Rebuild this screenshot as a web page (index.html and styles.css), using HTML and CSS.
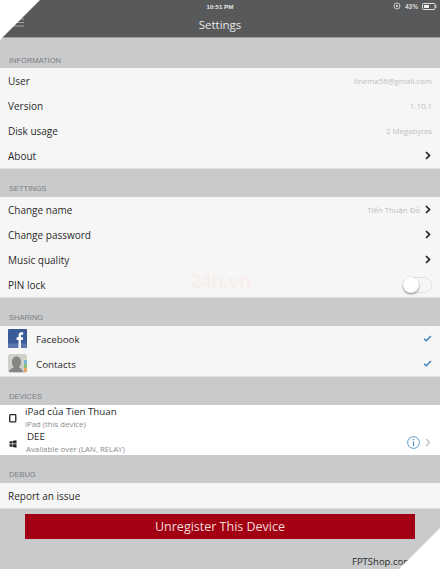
FILE: index.html
```html
<!DOCTYPE html>
<html lang="en">
<head>
<meta charset="utf-8">
<title>Settings</title>
<link rel="stylesheet" href="styles.css">
</head>
<body>
<div class="page">
  <header class="topbar">
    <div class="status">
      <span class="status-time">10:51 PM</span>
      <span class="status-right">
        <svg class="status-lock" width="8" height="8" viewBox="0 0 8 8"><circle cx="4" cy="4" r="3" fill="none" stroke="#c8c8c8" stroke-width="1"/><circle cx="4" cy="4" r="1.2" fill="#c8c8c8"/></svg>
        <span>43%</span>
        <svg width="15" height="7" viewBox="0 0 15 7"><rect x=".5" y=".5" width="12.5" height="6" rx="1" fill="none" stroke="#e0e0e0"/><rect x="2" y="2" width="5" height="3" fill="#f0f0f0"/><rect x="13.5" y="2.2" width="1" height="2.6" fill="#e0e0e0"/></svg>
      </span>
    </div>
    <div class="nav">
      <svg class="menu" width="14" height="9" viewBox="0 0 14 9"><path d="M1 1h12M1 4.5h12M1 8h12" stroke="#a5a6a8" stroke-width="1.2"/></svg>
      <span class="nav-title">Settings</span>
    </div>
  </header>

  <h2 class="label label-first">INFORMATION</h2>
  <section class="group">
    <div class="row"><span class="name">User</span><span class="value">linema56@gmail.com</span></div>
    <div class="row"><span class="name">Version</span><span class="value">1.10.1</span></div>
    <div class="row"><span class="name">Disk usage</span><span class="value">2 Megabytes</span></div>
    <div class="row"><span class="name">About</span><svg class="chev" viewBox="0 0 6 9"><path d="M1 1l3.5 3.5L1 8" fill="none" stroke="#222" stroke-width="1.7"/></svg></div>
  </section>

  <h2 class="label">SETTINGS</h2>
  <section class="group">
    <div class="row"><span class="name">Change name</span><span class="value value-chev">Tiến Thuận Đỗ</span><svg class="chev" viewBox="0 0 6 9"><path d="M1 1l3.5 3.5L1 8" fill="none" stroke="#222" stroke-width="1.7"/></svg></div>
    <div class="row"><span class="name">Change password</span><svg class="chev" viewBox="0 0 6 9"><path d="M1 1l3.5 3.5L1 8" fill="none" stroke="#222" stroke-width="1.7"/></svg></div>
    <div class="row"><span class="name">Music quality</span><svg class="chev" viewBox="0 0 6 9"><path d="M1 1l3.5 3.5L1 8" fill="none" stroke="#222" stroke-width="1.7"/></svg></div>
    <div class="row"><span class="name">PIN lock</span><span class="toggle"><span class="knob"></span></span></div>
    <div class="watermark"><span class="wm-text">24h.vn</span></div>
  </section>

  <h2 class="label">SHARING</h2>
  <section class="group">
    <div class="row row-icon">
      <svg class="app" viewBox="0 0 19 19"><rect width="19" height="19" rx="1" fill="#3b5a98"/><rect y="14.5" width="19" height="4.5" fill="#5a76ad"/><path d="M10.5 19v-8H8.6V8.2h1.9V6.300c0-2 1.200-3 3-3 .8 0 1.400.1 1.700.1v2.400h-1.100c-.9 0-1.200.5-1.200 1.200v1.200h2.200l-.3 2.800h-1.900v8z" fill="#fff"/></svg>
      <span class="name">Facebook</span>
      <svg class="check" viewBox="0 0 9 7"><path d="M1 3.700l2.300 2L8 1" fill="none" stroke="#3d7cb8" stroke-width="1.400"/></svg>
    </div>
    <div class="row row-icon">
      <svg class="app" viewBox="0 0 19 19"><rect width="19" height="19" rx="3" fill="#cfcfcb"/><rect x="16" y="1" width="3" height="5" fill="#d8d4c4"/><rect x="16" y="6" width="3" height="4" fill="#79b5d8"/><rect x="16" y="10" width="3" height="4" fill="#8cc17f"/><rect x="16" y="14" width="3" height="4" fill="#e8a860"/><path d="M1 18c.3-3 3-3.500 5-4.500-1.500-2-2.300-4-2-6.500.3-3 2.400-4.500 4.500-4.500S12.700 4 13 7c.3 2.500-.5 4.500-2 6.500 2 1 3.500 1.500 4 4.500z" fill="#858583"/></svg>
      <span class="name">Contacts</span>
      <svg class="check" viewBox="0 0 9 7"><path d="M1 3.700l2.300 2L8 1" fill="none" stroke="#3d7cb8" stroke-width="1.400"/></svg>
    </div>
  </section>

  <h2 class="label">DEVICES</h2>
  <section class="group group-white">
    <div class="row device">
      <svg class="dev-icon" viewBox="0 0 8 9"><rect x=".7" y=".7" width="6.100" height="7.100" rx=".8" fill="none" stroke="#222" stroke-width="1.300"/></svg>
      <div class="dev-text"><span class="dev-name">iPad của Tien Thuan</span><span class="dev-sub">iPad (this device)</span></div>
    </div>
    <div class="row device">
      <svg class="dev-icon dev-win" viewBox="0 0 8 8"><path d="M.5 1.600l3-.7v2.700h-3zM4 .8l3.500-.6v3.400H4zM.5 4.200h3v2.800l-3-.6zM4 4.200h3.500v3.500L4 7.100z" fill="#222"/></svg>
      <div class="dev-text dev-text-win"><span class="dev-name">DEE</span><span class="dev-sub">Available over (LAN, RELAY)</span></div>
      <svg class="info" viewBox="0 0 13 13"><circle cx="6.500" cy="6.500" r="5.900" fill="none" stroke="#4d92c4" stroke-width=".9"/><path d="M6.500 3v1.200M6.500 5.500v4.500" stroke="#4d92c4" stroke-width="1.200"/></svg>
      <svg class="chev chev-pale" viewBox="0 0 6 9"><path d="M1 1l3.500 3.500L1 8" fill="none" stroke="#bcbcbc" stroke-width="1.200"/></svg>
    </div>
  </section>

  <h2 class="label">DEBUG</h2>
  <section class="group">
    <div class="row"><span class="name">Report an issue</span></div>
  </section>

  <div class="action"><button class="unregister" type="button">Unregister This Device</button></div>
  <div class="credit">FPTShop.com</div>

  <div class="corner corner-tl"></div>
  <div class="corner corner-br"></div>
</div>
</body>
</html>
```

FILE: styles.css
```css
* { box-sizing: border-box; }
html, body { margin: 0; padding: 0; }
body { background: #c9cacc; font-family: "Open Sans", "Liberation Sans", sans-serif; }
.page { position: relative; width: 440px; height: 569px; overflow: hidden; background: #c9cacc; color: #2a2a2a; }

.topbar { height: 38px; background: #58595b; border-bottom: 1px solid #9b9c9e; color: #fff; }
.status { height: 12px; position: relative; display: flex; justify-content: center; align-items: center; padding-top: 1px; }
.status-time { font: bold 6.200px "Liberation Sans", sans-serif; color: #e8e8e8; }
.status-right { position: absolute; right: 3px; top: 2px; display: flex; align-items: center; gap: 4px; font: bold 6.500px "Liberation Sans", sans-serif; color: #d8d8d8; }
.nav { height: 25px; position: relative; display: flex; justify-content: center; align-items: center; }
.menu { position: absolute; left: 11px; top: 6px; }
.nav-title { font-size: 11.500px; color: #e9e9e9; margin-top: -1px; }

.label { margin: 0; height: 18px; padding: 4px 0 0 9px; font: normal 7.500px/11px "Liberation Sans", sans-serif; color: #7c7d7f; }
.label-first { margin-top: 13px; height: 17px; }

.group { position: relative; background: #f6f6f6; margin-bottom: 10px; border-bottom: 1px solid #e0e0e0; }
.group-white { background: #fff; border-bottom: 0; }
.row { height: 25px; display: flex; align-items: center; padding: 0 8px; font-size: 10px; }
.name { color: #2a2a2a; }
.value { margin-left: auto; font-size: 7.800px; color: #c0c0c0; }
.value-chev { margin-right: 5px; }
.chev { width: 6px; height: 9px; margin-left: auto; margin-right: 1px; flex: none; }
.value-chev + .chev { margin-left: 0; }

.toggle { margin-left: auto; margin-right: 0; width: 29px; height: 16px; border-radius: 8px; border: 1px solid #e2e2e2; background: #f6f6f6; position: relative; }
.knob { position: absolute; left: -1px; top: -1px; width: 16px; height: 16px; border-radius: 50%; background: #fff; box-shadow: 0 1px 2px rgba(0,0,0,.5); }

.watermark { position: absolute; left: 187px; top: 65px; width: 66px; height: 38px; display: flex; align-items: center; justify-content: center; overflow: hidden; }
.wm-text { font: bold 21px "Liberation Sans Narrow", "Liberation Sans", sans-serif; color: #f6efec; letter-spacing: -1px; }

.row-icon { gap: 8px; }
.row-icon .name { margin-left: 1px; margin-top: 1px; font-size: 9.800px; }
.app { width: 19px; height: 19px; flex: none; }
.check { width: 9px; height: 7px; margin-left: auto; margin-right: 0; }

.device { position: relative; padding-left: 9px; }
.dev-icon { width: 8px; height: 9px; flex: none; margin-top: 2px; }
.dev-win { height: 8px; }
.dev-text { display: flex; flex-direction: column; margin-left: 8px; line-height: 12px; }
.dev-text-win { margin-left: 9px; }
.dev-text-win .dev-name { margin-left: 1px; }
.dev-name { font-size: 9.800px; color: #2a2a2a; line-height: 13px; }
.dev-sub { font-size: 7.800px; color: #8a8a8a; line-height: 12px; }
.info { width: 13px; height: 13px; margin-left: auto; flex: none; }
.chev-pale { margin-left: 5px; margin-right: 1px; }

.action { padding: 5px 25px 0; margin-top: -10px; }
.unregister { display: block; width: 100%; height: 25px; border: 0; border-radius: 0; background: #a20012; color: #f3dcd8; font: 12.500px "Open Sans", sans-serif; padding: 0; }
.credit { padding: 16px 0 0 352px; font-size: 9.500px; color: #2a2a2a; white-space: nowrap; }

.corner { position: absolute; background: #fff; }
.corner-tl { left: 0; top: 0; width: 40px; height: 40px; clip-path: polygon(0 0, 100% 0, 0 100%); }
.corner-br { right: 0; bottom: 0; width: 41px; height: 41px; clip-path: polygon(100% 0, 100% 100%, 0 100%); }
```
